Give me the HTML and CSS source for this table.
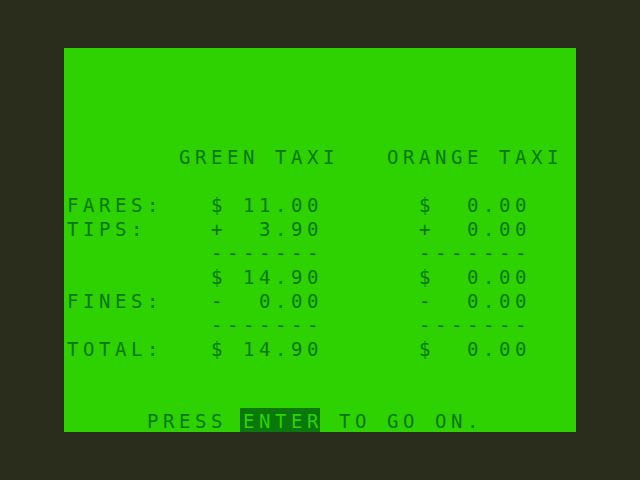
FILE: index.html
```html
<!DOCTYPE html>
<html>
<head>
<meta charset="utf-8">
<link rel="stylesheet" href="styles.css">
</head>
<body>
<div class="screen">
<div class="row"></div>
<div class="row"></div>
<div class="row"></div>
<div class="row"></div>
<div class="row">       GREEN TAXI   ORANGE TAXI</div>
<div class="row"></div>
<div class="row">FARES:   $ 11.00      $  0.00</div>
<div class="row">TIPS:    +  3.90      +  0.00</div>
<div class="row">         -------      -------</div>
<div class="row">         $ 14.90      $  0.00</div>
<div class="row">FINES:   -  0.00      -  0.00</div>
<div class="row">         -------      -------</div>
<div class="row">TOTAL:   $ 14.90      $  0.00</div>
<div class="row"></div>
<div class="row"></div>
<div class="row">     PRESS <span class="inv">ENTER</span> TO GO ON.</div>
</div>
</body>
</html>
```
FILE: styles.css
```css
html, body {
  margin: 0;
  padding: 0;
  background: #2a2c1c;
  width: 640px;
  height: 480px;
  overflow: hidden;
}
.screen {
  margin: 48px 64px;
  width: 512px;
  height: 384px;
  background: #2ed200;
  display: grid;
  grid-template-rows: repeat(16, 24px);
  color: #0a780a;
  font-family: "DejaVu Sans Mono", monospace;
  font-size: 19px;
  letter-spacing: 4.56px;
}
.row {
  white-space: pre;
  height: 24px;
  line-height: 24px;
  padding-top: 1px;
  padding-left: 3px;
  box-sizing: border-box;
}
.inv {
  background: #0a780a;
  color: #2ed200;
  display: inline-block;
  width: 80px;
  height: 24px;
  margin-top: -1px;
  padding-top: 1px;
  margin-left: -3px;
  padding-left: 3px;
  margin-right: 3px;
  box-sizing: border-box;
  vertical-align: top;
}
```
